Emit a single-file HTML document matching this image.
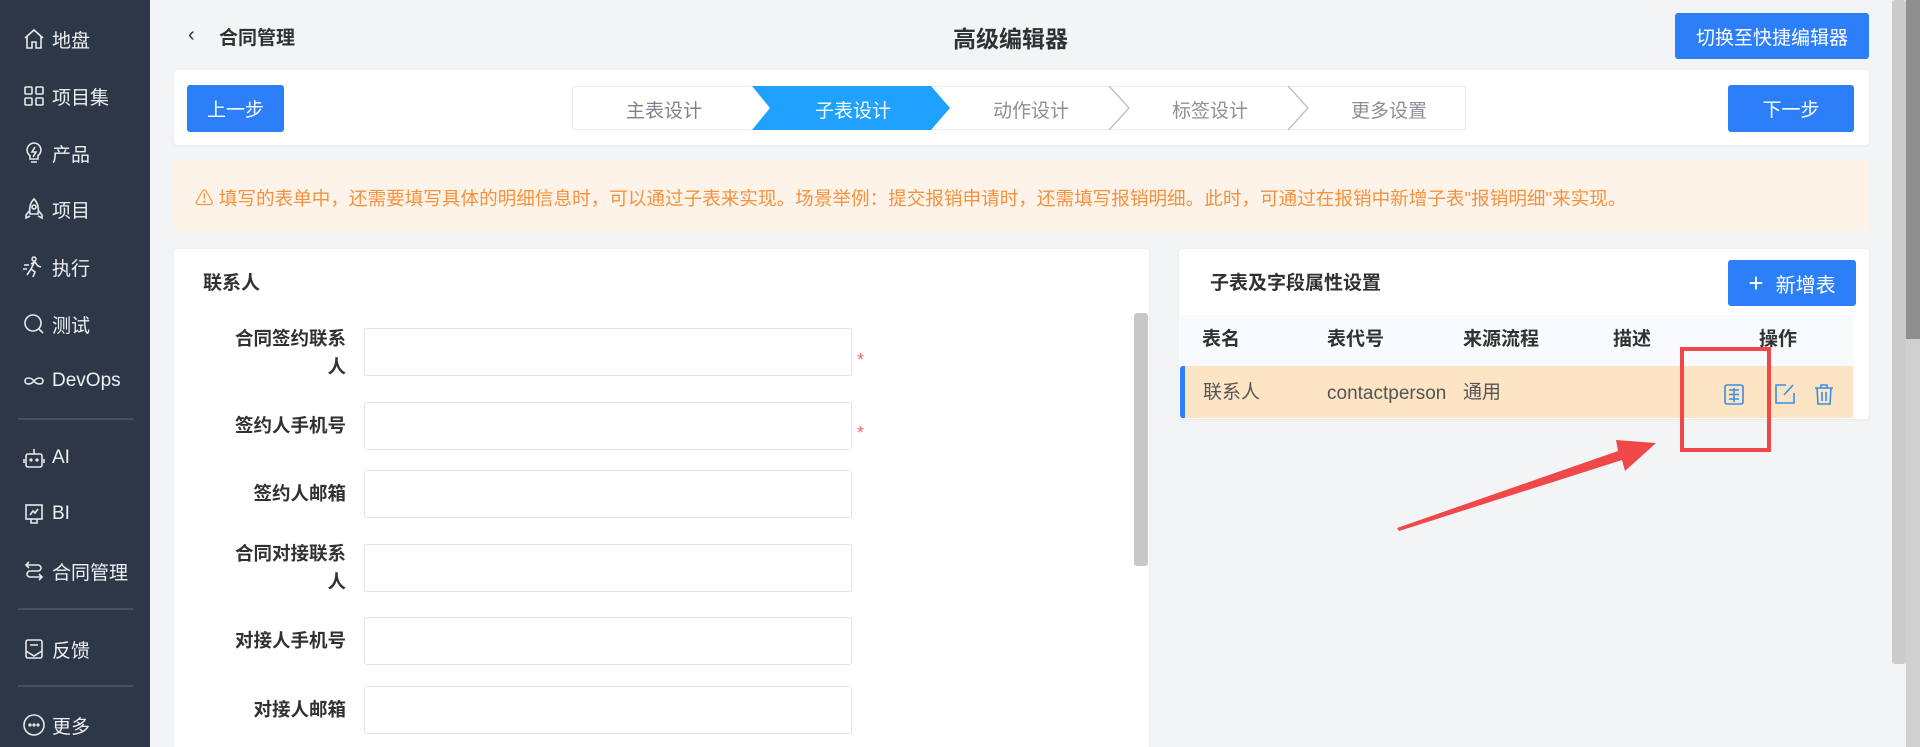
<!DOCTYPE html>
<html style="overflow:hidden"><head><meta charset="utf-8"><style>
*{box-sizing:border-box;margin:0;padding:0}
html,body{width:1920px;height:747px;overflow:hidden}
body{background:#f3f4f6;font-family:"Liberation Sans","Noto Sans CJK SC",sans-serif;position:relative;color:#303133}
.abs{position:absolute}
.side{left:0;top:0;width:150px;height:747px;background:#2e3747}
.si{position:absolute;left:22px;color:#eef0f3;font-size:19px;display:flex;align-items:center;gap:6px;height:26px}
.si svg{width:24px;height:24px;fill:none;stroke:#e6e8ec;stroke-width:1.6}
.sep{position:absolute;left:18px;width:115px;height:2px;background:#465063}
.card{background:#fff;border-radius:4px;box-shadow:0 1px 4px rgba(0,0,0,.05)}
.btn{background:#2d7ff9;color:#fff;font-size:19px;display:flex;align-items:center;justify-content:center;border-radius:3px}
.lab{position:absolute;left:222px;width:124px;text-align:right;font-size:18.5px;font-weight:bold;color:#303133;line-height:28px}
.inp{position:absolute;left:364px;width:488px;height:48px;border:1.5px solid #e2e4e8;border-radius:3px;background:#fff}
.ast{position:absolute;left:857px;color:#f56c6c;font-size:18px}
.st{position:absolute;top:96px;font-size:19px;color:#8c8f96;transform:translateX(-50%)}
.th{position:absolute;top:327px;font-size:19px;font-weight:bold;color:#303133;line-height:26px}
.td{position:absolute;top:380px;font-size:19px;color:#555;line-height:26px}
</style></head><body>
<div class="abs side">
 <div class="si" style="top:26px"><svg viewBox="0 0 24 24"><path d="M3 11 12 3l9 8M5 9v12h5v-6h4v6h5V9"/></svg>地盘</div>
 <div class="si" style="top:83px"><svg viewBox="0 0 24 24"><rect x="3" y="3" width="7" height="7" rx="1"/><rect x="14" y="3" width="7" height="7" rx="1"/><rect x="3" y="14" width="7" height="7" rx="1"/><rect x="14" y="14" width="7" height="7" rx="1"/></svg>项目集</div>
 <div class="si" style="top:140px"><svg viewBox="0 0 24 24"><path d="M12 2a7 7 0 0 0-4 12.7V18h8v-3.3A7 7 0 0 0 12 2zM9 21h6M13 6l-3 5h4l-3 5"/></svg>产品</div>
 <div class="si" style="top:196px"><svg viewBox="0 0 24 24"><path d="M12 2c4 4 5 9 4 15H8C7 11 8 6 12 2zM8 13l-4 5v3l4-2M16 13l4 5v3l-4-2"/><circle cx="12" cy="10" r="2"/></svg>项目</div>
 <div class="si" style="top:254px"><svg viewBox="0 0 24 24"><path d="M14 4a2 2 0 1 0 0 .1M9 9l4-2 3 4 3 1M12 8l-3 6 4 3-2 5M9 14l-4 6M2 10h5M1 14h4"/></svg>执行</div>
 <div class="si" style="top:311px"><svg viewBox="0 0 24 24"><circle cx="11" cy="11" r="8"/><path d="M17 17l4 4"/></svg>测试</div>
 <div class="si" style="top:368px"><svg viewBox="0 0 24 24"><path d="M12 12c-3-4-9-4-9 0s6 4 9 0 9-4 9 0-6 4-9 0"/></svg>DevOps</div>
 <div class="sep" style="top:418px"></div>
 <div class="si" style="top:445px"><svg viewBox="0 0 24 24"><rect x="4" y="8" width="16" height="13" rx="2"/><path d="M12 3v5M2 13v4M22 13v4"/><circle cx="9" cy="14" r=".8"/><circle cx="15" cy="14" r=".8"/></svg>AI</div>
 <div class="si" style="top:501px"><svg viewBox="0 0 24 24"><rect x="4" y="3" width="16" height="14"/><path d="M8 13l3-4 2 2 3-4M9 17v4h6v-4"/></svg>BI</div>
 <div class="si" style="top:558px"><svg viewBox="0 0 24 24"><path d="M4 6h12a3 3 0 0 1 0 6H8a3 3 0 0 0 0 6h12M7 3 4 6l3 3M17 21l3-3-3-3"/></svg>合同管理</div>
 <div class="sep" style="top:608px"></div>
 <div class="si" style="top:636px"><svg viewBox="0 0 24 24"><rect x="4" y="3" width="16" height="18" rx="2"/><path d="M8 8h8M4 14l8 5 8-5"/></svg>反馈</div>
 <div class="sep" style="top:685px"></div>
 <div class="si" style="top:712px"><svg viewBox="0 0 24 24"><circle cx="12" cy="12" r="10"/><circle cx="8" cy="12" r=".8"/><circle cx="12" cy="12" r=".8"/><circle cx="16" cy="12" r=".8"/></svg>更多</div>
</div>

<div class="abs" style="left:188px;top:24px;font-size:20px;color:#303133">‹</div>
<div class="abs" style="left:219px;top:23px;font-size:19px;font-weight:bold">合同管理</div>
<div class="abs" style="left:953px;top:20px;font-size:23px;font-weight:bold;color:#303133">高级编辑器</div>
<div class="abs btn" style="left:1675px;top:13px;width:194px;height:46px">切换至快捷编辑器</div>

<div class="abs card" style="left:174px;top:70px;width:1695px;height:75px"></div>
<div class="abs btn" style="left:187px;top:85px;width:97px;height:47px">上一步</div>
<div class="abs btn" style="left:1728px;top:85px;width:126px;height:47px">下一步</div>
<div class="abs" style="left:572px;top:86px;width:894px;height:44px;border:1.5px solid #e6ebf2;border-radius:3px;background:#fff"></div>
<svg class="abs" style="left:0;top:0" width="1920" height="747">
 <polygon points="752,86 931,86 950,108 931,130 752,130 770,108" fill="#1ea1ff"/>
 <polyline points="1109,86 1129,108 1109,130" fill="none" stroke="#c0c4cc" stroke-width="1.5"/>
 <polyline points="1288,86 1308,108 1288,130" fill="none" stroke="#c0c4cc" stroke-width="1.5"/>
</svg>
<div class="st" style="left:664px;color:#7d828c">主表设计</div>
<div class="st" style="left:853px;color:#fff">子表设计</div>
<div class="st" style="left:1031px">动作设计</div>
<div class="st" style="left:1210px">标签设计</div>
<div class="st" style="left:1389px">更多设置</div>

<div class="abs" style="left:174px;top:160px;width:1695px;height:73px;background:#fdf3e9;border-radius:3px"></div>
<div class="abs" style="left:195px;top:184px;font-size:18.6px;color:#f5923e;white-space:nowrap">⚠ 填写的表单中，还需要填写具体的明细信息时，可以通过子表来实现。场景举例：提交报销申请时，还需填写报销明细。此时，可通过在报销中新增子表"报销明细"来实现。</div>

<div class="abs card" style="left:174px;top:249px;width:975px;height:498px;border-radius:4px 4px 0 0"></div>
<div class="abs" style="left:203px;top:268px;font-size:19px;font-weight:bold">联系人</div>
<div class="abs" style="left:1134px;top:313px;width:14px;height:253px;background:#c8c8c8;border-radius:3px"></div>

<div class="lab" style="top:325px">合同签约联系人</div><div class="inp" style="top:328px"></div><div class="ast" style="top:350px">*</div>
<div class="lab" style="top:412px">签约人手机号</div><div class="inp" style="top:402px"></div><div class="ast" style="top:423px">*</div>
<div class="lab" style="top:480px">签约人邮箱</div><div class="inp" style="top:470px"></div>
<div class="lab" style="top:540px">合同对接联系人</div><div class="inp" style="top:544px"></div>
<div class="lab" style="top:627px">对接人手机号</div><div class="inp" style="top:617px"></div>
<div class="lab" style="top:696px">对接人邮箱</div><div class="inp" style="top:686px"></div>

<div class="abs card" style="left:1179px;top:249px;width:690px;height:170px"></div>
<div class="abs" style="left:1210px;top:268px;font-size:19px;font-weight:bold">子表及字段属性设置</div>
<div class="abs btn" style="left:1728px;top:260px;width:128px;height:46px;font-size:20px"><span style="font-size:26px;margin-right:12px;line-height:20px">+</span>新增表</div>
<div class="abs" style="left:1180px;top:315px;width:673px;height:51px;background:#f8fafd"></div>
<div class="abs" style="left:1180px;top:366px;width:673px;height:52px;background:#fde4c4"></div>
<div class="abs" style="left:1180px;top:366px;width:5px;height:52px;background:#2d7ff9;border-radius:3px 0 0 3px"></div>
<div class="th" style="left:1202px">表名</div>
<div class="th" style="left:1327px">表代号</div>
<div class="th" style="left:1463px">来源流程</div>
<div class="th" style="left:1613px">描述</div>
<div class="th" style="left:1759px">操作</div>
<div class="td" style="left:1203px">联系人</div>
<div class="td" style="left:1327px;top:381px">contactperson</div>
<div class="td" style="left:1463px">通用</div>
<svg class="abs" style="left:0;top:0" width="1920" height="747" fill="none" stroke="#3a8ee6" stroke-width="1.6">
 <rect x="1725" y="385" width="18" height="19" rx="2"/><path d="M1729 390h10M1729 394.5h10M1729 399h10M1734 388v14"/>
 <path d="M1786 385h-10v18h18v-10M1784 395l9-10"/>
 <path d="M1815 388h18M1821 388v-3h6v3M1817 388l1 16h12l1-16M1822 392v9M1826 392v9"/>
 <rect x="1682" y="349" width="87" height="101" stroke="#f04848" stroke-width="4"/>
 <polygon points="1397,528 1618,451 1616,440 1656,443 1625,471 1622,460 1399,531" fill="#f04848" stroke="none"/>
</svg>

<div class="abs" style="left:1892px;top:0;width:14px;height:664px;background:#cbcbcb;border-radius:3px"></div>
<div class="abs" style="left:1906px;top:0;width:14px;height:339px;background:#8f8f8f"></div>
<div class="abs" style="left:1906px;top:339px;width:14px;height:408px;background:#d0d0d0"></div>
</body></html>
